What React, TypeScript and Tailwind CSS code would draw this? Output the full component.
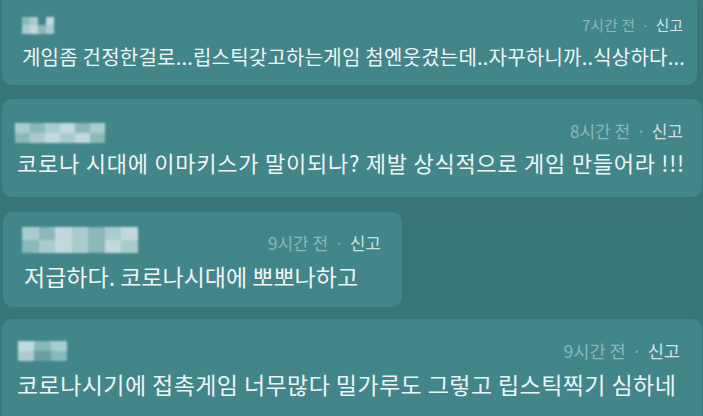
import React from 'react';

const font = { fontFamily: '"Noto Sans CJK KR", "Noto Sans", sans-serif' };

function Meta({ time, size }: { time: string; size: string }) {
    return (
        <div className={`${size} leading-[20px] whitespace-nowrap`}>
            <span className="text-[#8ab7b8]">{time}</span>
            <span className="text-[#7fadae] mx-[6px]">·</span>
            <span className="text-[#cfe2e2]">신고</span>
        </div>
    );
}

function Blur({ cells, cols, className }: { cells: string[]; cols: string; className: string }) {
    return (
        <div className={`grid ${cols} blur-[1.2px] opacity-90 ${className}`}>
            {cells.map((c, i) => (
                <div key={i} className={c} />
            ))}
        </div>
    );
}

const a = 'bg-[#b7d4d5]';
const b = 'bg-[#93bebf]';
const c = 'bg-[#cfe3e3]';
const d = 'bg-[#6ea2a4]';
const e = 'bg-transparent';

export default function App() {
    return (
        <div style={font} className="w-[703px] h-[416px] overflow-hidden bg-[#397678] text-[#eef5f5]">
            <div className="flex flex-col">
                {/* 1 */}
                <div className="-mt-[6px] ml-[2px] w-[695px] h-[91px] rounded-[10px] bg-[#42868a] pt-[21px] pl-[20px] pr-[14px]">
                    <div className="flex items-center justify-between h-[20px]">
                        <Blur
                            cols="grid-cols-4"
                            className="w-[32px] h-[17px]"
                            cells={[b, a, e, c, a, c, b, a]}
                        />
                        <Meta time="7시간 전" size="text-[15px]" />
                    </div>
                    <p className="mt-[9px] text-[20px] leading-[26px] tracking-[0.22px] whitespace-nowrap">
                        게임좀 건정한걸로...립스틱갖고하는게임 첨엔웃겼는데..자꾸하니까..식상하다...
                    </p>
                </div>

                {/* 2 */}
                <div className="mt-[14px] ml-[2px] w-[700px] h-[98px] rounded-[10px] bg-[#42868a] pt-[22px] pl-[15px] pr-[19px]">
                    <div className="flex items-center justify-between h-[20px]">
                        <Blur
                            cols="grid-cols-6"
                            className="w-[90px] h-[20px] -ml-[2px] mt-[4px]"
                            cells={[a, b, a, c, b, a, b, a, c, a, c, b]}
                        />
                        <Meta time="8시간 전" size="text-[17px]" />
                    </div>
                    <p className="mt-[7px] text-[22px] leading-[28px] tracking-[0.75px] whitespace-nowrap">
                        코로나 시대에 이마키스가 말이되나? 제발 상식적으로 게임 만들어라 !!!
                    </p>
                </div>

                {/* 3 */}
                <div className="mt-[15px] ml-[3px] w-[399px] h-[95px] rounded-[10px] bg-[#42868a] pt-[15px] pl-[21px] pr-[21px]">
                    <div className="flex items-start justify-between h-[26px]">
                        <Blur
                            cols="grid-cols-7"
                            className="w-[116px] h-[26px] -ml-[2px]"
                            cells={[a, b, c, a, b, a, c, b, a, c, a, b, c, a]}
                        />
                        <div className="mt-[6px]">
                            <Meta time="9시간 전" size="text-[17px]" />
                        </div>
                    </div>
                    <p className="mt-[9px] text-[23px] leading-[28px] whitespace-nowrap">
                        저급하다. 코로나시대에 뽀뽀나하고
                    </p>
                </div>

                {/* 4 */}
                <div className="mt-[12px] ml-[2px] w-[700px] h-[110px] rounded-[10px] bg-[#42868a] pt-[22px] pl-[15px] pr-[22px]">
                    <div className="flex items-center justify-between h-[20px]">
                        <Blur
                            cols="grid-cols-3"
                            className="w-[49px] h-[20px] ml-[1px]"
                            cells={[c, b, a, a, d, b]}
                        />
                        <Meta time="9시간 전" size="text-[17.6px]" />
                    </div>
                    <p className="mt-[9px] text-[23px] leading-[28px] tracking-[0.42px] whitespace-nowrap">
                        코로나시기에 접촉게임 너무많다 밀가루도 그렇고 립스틱찍기 심하네
                    </p>
                </div>
            </div>
        </div>
    );
}
